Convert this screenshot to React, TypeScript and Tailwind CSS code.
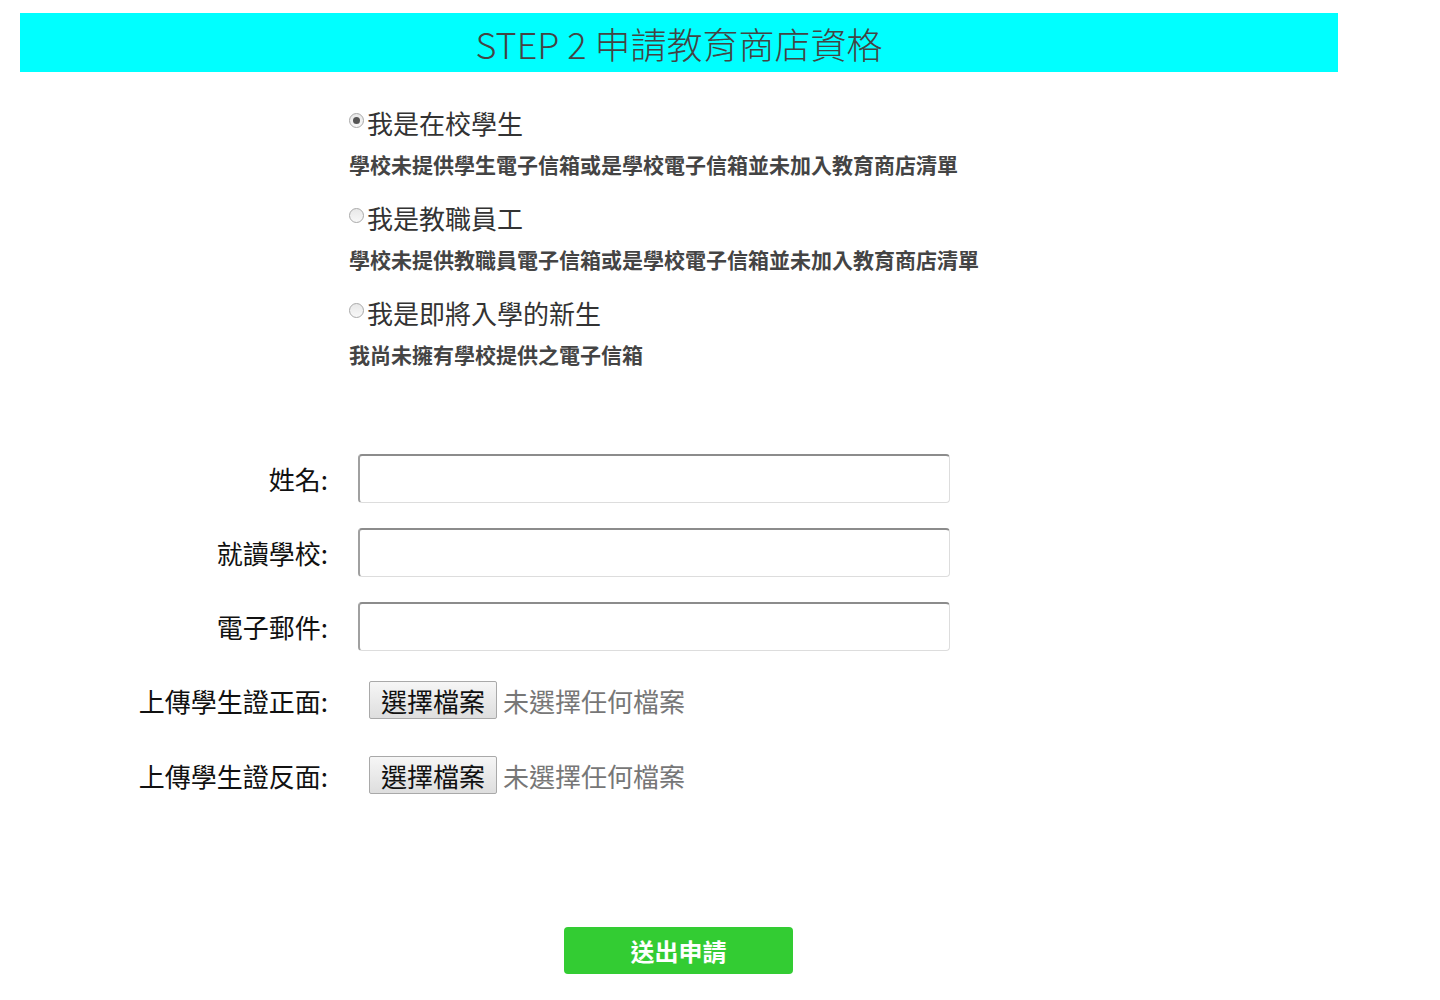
import React from "react";

const font = { fontFamily: '"Noto Sans CJK TC", "Noto Sans", sans-serif' };

const roles = [
  { label: "我是在校學生", desc: "學校未提供學生電子信箱或是學校電子信箱並未加入教育商店清單", checked: true },
  { label: "我是教職員工", desc: "學校未提供教職員電子信箱或是學校電子信箱並未加入教育商店清單", checked: false },
  { label: "我是即將入學的新生", desc: "我尚未擁有學校提供之電子信箱", checked: false },
];

function Radio({ checked }: { checked: boolean }) {
  return (
    <span className="w-[15px] h-[15px] rounded-full border border-[#a9a9a9] bg-gradient-to-b from-[#e8e8e8] to-[#f8f8f8] flex items-center justify-center shrink-0">
      {checked && <span className="w-[7px] h-[7px] rounded-full bg-[#555]" />}
    </span>
  );
}

function TextRow({ label }: { label: string }) {
  return (
    <div className="flex items-center h-[49px] mb-[25px]">
      <div className="w-[328px] text-right text-[26px] text-[#111]">{label}</div>
      <div className="ml-[30px] w-[592px] h-[49px] rounded-[4px] border border-[#ddd] border-t-2 border-t-[#8c8c8c] border-l-2 border-l-[#a0a0a0] bg-white" />
    </div>
  );
}

function FileRow({ label }: { label: string }) {
  return (
    <div className="flex items-center h-[38px] mb-[37px]">
      <div className="w-[328px] text-right text-[26px] text-[#111] whitespace-nowrap">{label}</div>
      <div className="ml-[41px] h-[38px] w-[128px] flex items-center justify-center rounded-[2px] border border-[#a9a9a9] bg-gradient-to-b from-[#f6f6f6] to-[#dedede] text-[26px] text-[#111]">
        選擇檔案
      </div>
      <div className="ml-[6px] text-[26px] text-[#777]">未選擇任何檔案</div>
    </div>
  );
}

export default function App() {
  return (
    <div className="w-[1440px] h-[1000px] bg-white relative" style={font}>
      <div className="pt-[13px] pl-[20px]">
        <div className="w-[1318px] h-[59px] bg-[#00ffff] flex items-center justify-center">
          <span className="text-[36px] font-light text-[#444]">STEP 2 申請教育商店資格</span>
        </div>
      </div>

      <div className="pl-[349px] pt-[31px]">
        {roles.map((r) => (
          <div key={r.label} className="h-[95px]">
            <div className="flex items-center h-[38px]">
              <span className="mt-[-4px]"><Radio checked={r.checked} /></span>
              <span className="ml-[3px] text-[26px] text-[#333]">{r.label}</span>
            </div>
            <div className="mt-[10px] text-[21px] font-bold text-[#444] leading-[26px] whitespace-nowrap">{r.desc}</div>
          </div>
        ))}
      </div>

      <div className="pt-[66px]">
        <TextRow label="姓名:" />
        <TextRow label="就讀學校:" />
        <TextRow label="電子郵件:" />
        <div className="pt-[5px]">
          <FileRow label="上傳學生證正面:" />
          <FileRow label="上傳學生證反面:" />
        </div>
      </div>

      <div className="pt-[96px] pl-[564px]">
        <button className="w-[229px] h-[47px] rounded-[4px] bg-[#33cc33] text-white text-[24px] font-bold">
          送出申請
        </button>
      </div>
    </div>
  );
}
